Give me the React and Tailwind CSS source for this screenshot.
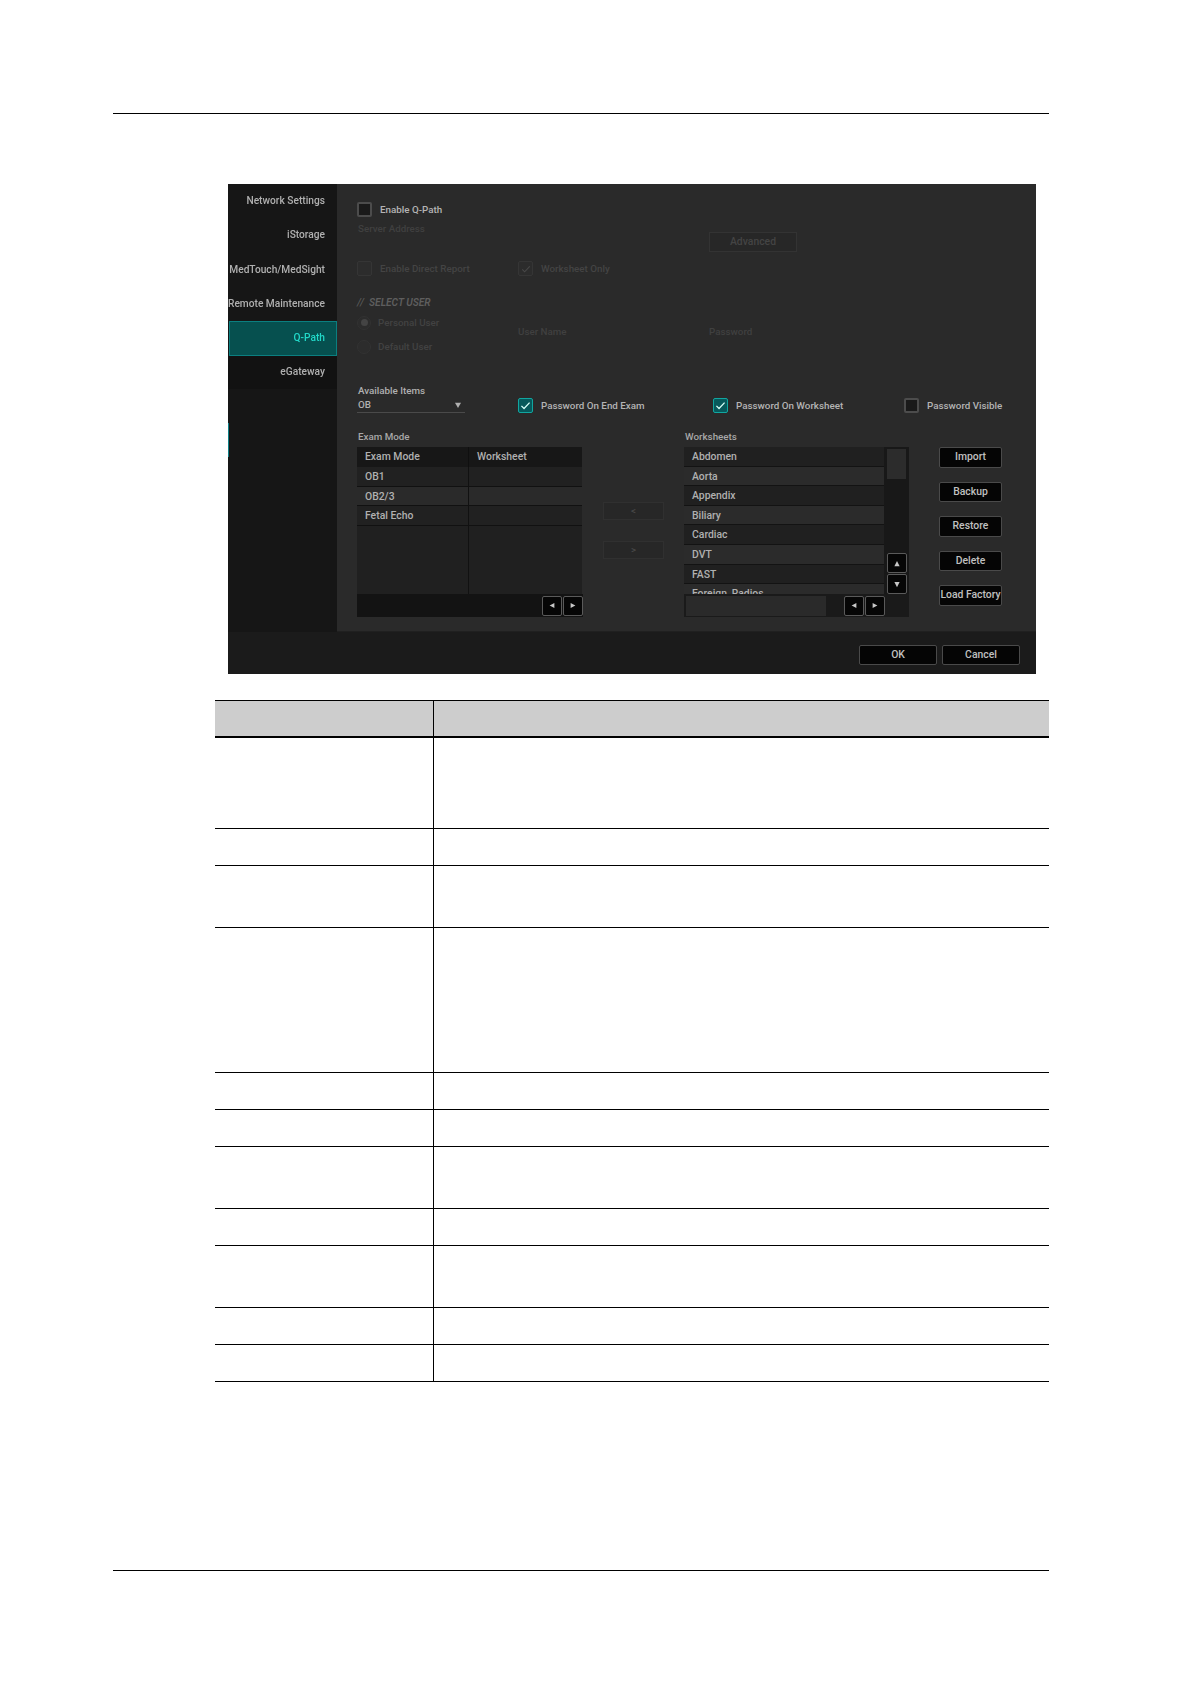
import React from 'react';

const sideItems = ['Network Settings', 'iStorage', 'MedTouch/MedSight', 'Remote Maintenance'];
const examRows = [
  { name: 'OB1', bg: 'bg-[#212121]' },
  { name: 'OB2/3', bg: 'bg-[#2a2a2a]' },
  { name: 'Fetal Echo', bg: 'bg-[#212121]' },
];
const worksheets = ['Abdomen', 'Aorta', 'Appendix', 'Biliary', 'Cardiac', 'DVT', 'FAST', 'Foreign_Radios'];
const sideButtons = ['Import', 'Backup', 'Restore', 'Delete', 'Load Factory'];
const rowHeights = ['h-[91px]', 'h-[37px]', 'h-[62px]', 'h-[145px]', 'h-[37px]', 'h-[37px]', 'h-[62px]', 'h-[37px]', 'h-[62px]', 'h-[37px]', 'h-[36px]'];

function Checkbox({ checked, disabled }) {
  if (disabled) {
    return (
      <span className="flex h-[15px] w-[15px] shrink-0 items-center justify-center rounded-[2px] border border-[#353535] bg-[#2c2c2c]">
        {checked ? (
          <svg viewBox="0 0 16 16" className="h-3 w-3" fill="none" stroke="#484848" strokeWidth="1.5">
            <path d="M3 8.5l3.2 3.2L13 4.5" />
          </svg>
        ) : null}
      </span>
    );
  }
  if (checked) {
    return (
      <span className="flex h-[15px] w-[15px] shrink-0 items-center justify-center rounded-[2px] border border-[#11a6a0] bg-[#07595b]">
        <svg viewBox="0 0 16 16" className="h-[13px] w-[13px]" fill="none" stroke="#d6fff8" strokeWidth="1.6">
          <path d="M3 8.5l3.2 3.2L13 4.5" />
        </svg>
      </span>
    );
  }
  return <span className="h-[15px] w-[15px] shrink-0 rounded-[2px] border-2 border-[#4c4c4c] bg-[#1a1a1a]" />;
}

function CheckItem({ label, checked, disabled }) {
  return (
    <div className="flex h-[15px] items-center gap-2">
      <Checkbox checked={checked} disabled={disabled} />
      <span className={`pt-px ${disabled ? 'text-[#444]' : 'text-[#b4b4b4]'}`}>{label}</span>
    </div>
  );
}

function Radio({ label, selected }) {
  return (
    <div className="flex h-[15px] items-center gap-[7px] text-[#424242]">
      <span className="flex h-[14px] w-[14px] items-center justify-center rounded-full border border-[#323232] bg-[#2c2c2c]">
        {selected ? <span className="h-[7px] w-[7px] rounded-full bg-[#444]" /> : null}
      </span>
      <span>{label}</span>
    </div>
  );
}

function Arrow({ dir }) {
  const points = {
    left: '8,1 8,7 2,4',
    right: '2,1 2,7 8,4',
    up: '1,7 7,7 4,1',
    down: '1,1 7,1 4,7',
  };
  const box = dir === 'left' || dir === 'right' ? '0 0 10 8' : '0 0 8 8';
  return (
    <svg viewBox={box} className="h-[7px] w-[8px]" fill="#c8c8c8">
      <polygon points={points[dir]} />
    </svg>
  );
}

function ArrowButton({ dir }) {
  return (
    <span className="flex h-[20px] w-[20px] items-center justify-center rounded-[2px] border border-[#5a5a5a] bg-[#060606]">
      <Arrow dir={dir} />
    </span>
  );
}

function DarkButton({ label, className }) {
  return (
    <div className={`flex items-center justify-center rounded-[2px] border border-[#4a4a4a] bg-[#050505] text-[10.4px] text-[#c0c0c0] ${className}`}>
      {label}
    </div>
  );
}

function Dialog() {
  return (
    <div className="flex h-[490px] w-[808px] flex-col bg-[#1b1b1b] font-['Roboto',sans-serif] text-[9.8px] font-medium leading-none blur-[0.4px]">
      <div className="flex h-[448px]">
        {/* left nav */}
        <div className="relative w-[109px] bg-[#161616] text-[10.2px]">
          {sideItems.map((item) => (
            <div key={item} className="flex h-[34.3px] items-center justify-end whitespace-nowrap pr-3 text-[#b0b0b0]">
              {item}
            </div>
          ))}
          <div className="ml-px flex h-[35px] items-center justify-end border border-[#0b7f80] bg-[#06504f] pb-[2px] pr-[11px] text-[#22d8c8]">
            Q-Path
          </div>
          <div className="flex h-[33px] items-center justify-end bg-[#121212] pb-[2px] pr-3 text-[#b0b0b0]">eGateway</div>
          <div className="absolute left-0 top-[239px] h-[34px] w-px bg-[#0e7f86]" />
        </div>

        {/* settings panel */}
        <div className="flex-1 border-b border-[#202020] bg-[#2a2a2a] pl-5 pt-[18px]">
          <div className="grid grid-cols-[161px_191px_195px_1fr]">
            <div className="col-span-4">
              <CheckItem label="Enable Q-Path" />
            </div>

            <div className="mt-[5px] h-[30px] pl-px pt-[2px] text-[#404040]">Server Address</div>
            <div className="col-start-3 mt-[5px] flex h-[30px] items-end">
              <div className="flex h-[20px] w-[88px] items-center justify-center border border-[#333] bg-[#272727] text-[10.4px] text-[#444]">
                Advanced
              </div>
            </div>
            <div className="col-start-1 mt-[9px]">
              <CheckItem label="Enable Direct Report" disabled />
            </div>
            <div className="col-span-3 mt-[9px]">
              <CheckItem label="Worksheet Only" checked disabled />
            </div>

            <div className="mt-[20px] flex h-[60px] flex-col">
              <div className="flex h-[14px] items-center gap-[5px] text-[10.2px] font-semibold italic text-[#5e5e5e]">
                <span className="font-normal">//</span>
                <span>SELECT USER</span>
              </div>
              <div className="mt-[5px]">
                <Radio label="Personal User" selected />
              </div>
              <div className="mt-[9px]">
                <Radio label="Default User" />
              </div>
            </div>
            <div className="mt-[20px] pt-[31px] text-[#404040]">User Name</div>
            <div className="col-span-2 mt-[20px] pt-[31px] text-[#404040]">Password</div>

            <div className="mt-[28px] flex h-[29px] w-[108px] flex-col border-b border-[#4a4a4a] pl-px pt-[2px] text-[#b0b0b0]">
              <span className="h-[14px]">Available Items</span>
              <div className="flex items-center justify-between pr-[4px]">
                <span>OB</span>
                <svg viewBox="0 0 8 8" className="h-[6px] w-[6px]" fill="#b0b0b0">
                  <polygon points="0,1 8,1 4,8" />
                </svg>
              </div>
            </div>
            <div className="mt-[28px] flex h-[29px] items-end">
              <CheckItem label="Password On End Exam" checked />
            </div>
            <div className="mt-[28px] flex h-[29px] items-end pl-[4px]">
              <CheckItem label="Password On Worksheet" checked />
            </div>
            <div className="mt-[28px] flex h-[29px] items-end">
              <CheckItem label="Password Visible" />
            </div>
          </div>

          <div className="mt-[18px] flex">
            {/* exam mode table */}
            <div className="w-[225px]">
              <div className="mb-[5px] h-[11px] pl-px pt-px text-[#a8a8a8]">Exam Mode</div>
              <div className="flex h-[170px] flex-col bg-[#202020] text-[10.4px]">
                <div className="grid h-[20px] grid-cols-[112px_1fr] items-center bg-[#171717] text-[#b0b0b0]">
                  <span className="border-r border-[#0f0f0f] pl-2 leading-[20px]">Exam Mode</span>
                  <span className="pl-2">Worksheet</span>
                </div>
                {examRows.map((row) => (
                  <div key={row.name} className={`grid h-[19.6px] grid-cols-[112px_1fr] items-center border-b border-[#111] text-[#b0b0b0] ${row.bg}`}>
                    <span className="h-full border-r border-[#111] pl-2 leading-[19px]">{row.name}</span>
                  </div>
                ))}
                <div className="grid flex-1 grid-cols-[112px_1fr]">
                  <span className="border-r border-[#111]" />
                </div>
                <div className="-mr-px flex h-[23px] items-center justify-end gap-px bg-[#131313]">
                  <ArrowButton dir="left" />
                  <ArrowButton dir="right" />
                </div>
              </div>
            </div>

            {/* move buttons */}
            <div className="ml-[21px] mr-[20px] flex w-[61px] flex-col gap-[21px] pt-[71px]">
              <div className="flex h-[18px] items-center justify-center border border-[#303030] bg-[#272727] text-[#4a4a4a]">&lt;</div>
              <div className="flex h-[18px] items-center justify-center border border-[#303030] bg-[#272727] text-[#4a4a4a]">&gt;</div>
            </div>

            {/* worksheets table */}
            <div className="w-[225px]">
              <div className="mb-[5px] h-[11px] pl-px pt-px text-[#a8a8a8]">Worksheets</div>
              <div className="flex h-[170px] flex-col bg-[#1a1a1a] text-[10.4px]">
                <div className="flex h-[147px]">
                  <div className="w-[200px] overflow-hidden">
                    {worksheets.map((name, index) => (
                      <div
                        key={name}
                        className={`flex h-[19.6px] shrink-0 items-center border-b border-[#131313] pl-[8px] pt-[2px] text-[#b0b0b0] ${index % 2 === 0 ? 'bg-[#202020]' : 'bg-[#2b2b2b]'}`}
                      >
                        {name}
                      </div>
                    ))}
                  </div>
                  <div className="flex w-[25px] flex-col items-center bg-[#181818] pt-[2px]">
                    <div className="h-[30px] w-[19px] bg-[#2c2c2c]" />
                    <div className="mt-auto flex flex-col gap-px">
                      <ArrowButton dir="up" />
                      <ArrowButton dir="down" />
                    </div>
                  </div>
                </div>
                <div className="flex h-[23px] items-center pl-[2px]">
                  <div className="h-[20px] w-[140px] bg-[#2a2a2a]" />
                  <div className="ml-[18px] flex gap-px">
                    <ArrowButton dir="left" />
                    <ArrowButton dir="right" />
                  </div>
                </div>
              </div>
            </div>

            {/* side actions */}
            <div className="ml-[30px] flex w-[63px] flex-col gap-[14px] pt-[16px]">
              {sideButtons.map((label) => (
                <DarkButton key={label} label={label} className="h-[20.5px] whitespace-nowrap" />
              ))}
            </div>
          </div>
        </div>
      </div>

      {/* footer */}
      <div className="flex flex-1 items-start justify-end gap-[5px] pr-4 pt-[13px]">
        <DarkButton label="OK" className="h-[20px] w-[78px]" />
        <DarkButton label="Cancel" className="h-[20px] w-[78px]" />
      </div>
    </div>
  );
}

function ParamTable() {
  return (
    <div className="ml-[215px] w-[834px] border-b border-black">
      <div className="grid h-[38px] grid-cols-[219px_1fr] border-t border-b-2 border-black bg-[#cdcdcd]">
        <div className="border-r border-black" />
        <div />
      </div>
      {rowHeights.map((height, index) => (
        <div key={index} className={`grid grid-cols-[219px_1fr] ${height} ${index < rowHeights.length - 1 ? 'border-b border-black' : ''}`}>
          <div className="border-r border-black" />
          <div />
        </div>
      ))}
    </div>
  );
}

export default function App() {
  return (
    <div className="flex h-[1684px] w-[1190px] flex-col bg-white pt-[113px]">
      <div className="ml-[113px] h-px w-[936px] bg-black" />
      <div className="ml-[228px] mt-[70px]">
        <Dialog />
      </div>
      <div className="mt-[26px]">
        <ParamTable />
      </div>
      <div className="ml-[113px] mt-[188px] h-px w-[936px] bg-black" />
    </div>
  );
}
